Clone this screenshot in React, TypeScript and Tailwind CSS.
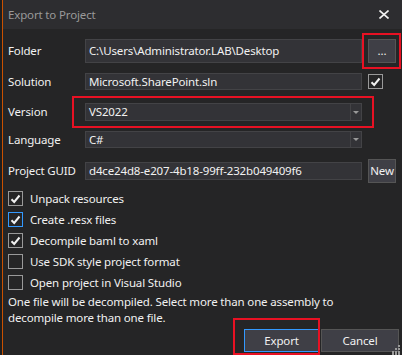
import React from "react";

const font = { fontFamily: '"Noto Sans", "Liberation Sans", sans-serif' };

function Check({ checked, focused }: { checked?: boolean; focused?: boolean }) {
  return (
    <div
      className={`flex h-[15px] w-[15px] shrink-0 items-center justify-center border ${
        focused ? "border-[#3399ff]" : "border-[#999999]"
      } bg-[#252526]`}
    >
      {checked && (
        <svg width="11" height="10" viewBox="0 0 11 10">
          <path d="M1.5 5.2 L4.2 8 L9.5 1.5" fill="none" stroke="#f1f1f1" strokeWidth="2" />
        </svg>
      )}
    </div>
  );
}

function Combo({ value, h }: { value: string; h: string }) {
  return (
    <div className={`flex ${h} w-[277px] items-center border border-[#434346] bg-[#333337]`}>
      <div className="flex-1 pl-[3px] text-[#f1f1f1]">{value}</div>
      <div className="flex h-full w-[11px] items-center justify-center border-l border-[#434346]">
        <svg width="6" height="3" viewBox="0 0 6 3">
          <path d="M0 0 H6 L3 3 Z" fill="#999999" />
        </svg>
      </div>
    </div>
  );
}

function Row({ label, children, className }: { label: string; children: React.ReactNode; className: string }) {
  return (
    <div className={`flex items-center ${className}`}>
      <div className="w-[85px] shrink-0 whitespace-nowrap pl-[8px] text-[#f1f1f1]">{label}</div>
      {children}
    </div>
  );
}

export default function App() {
  const boxes: [string, boolean, boolean][] = [
    ["Unpack resources", true, false],
    ["Create .resx files", true, true],
    ["Decompile baml to xaml", true, false],
    ["Use SDK style project format", false, false],
    ["Open project in Visual Studio", false, false],
  ];
  return (
    <div
      className="relative flex h-[355px] w-[402px] overflow-hidden bg-[#252526] text-[11.5px] leading-[16px] tracking-[-0.15px]"
      style={font}
    >
      <div className="w-[2px] bg-[#1e1e1e]" />
      <div className="w-[1px] bg-[#ca5100]" />
      <div className="flex flex-1 flex-col">
        <div className="flex h-[29px] items-center justify-between bg-[#2d2d30] pl-[5px] pr-[13px]">
          <span className="text-[#999999]">Export to Project</span>
          <svg width="10" height="9" viewBox="0 0 10 9">
            <path d="M0.5 0.5 L9.5 8.5 M9.5 0.5 L0.5 8.5" stroke="#f1f1f1" strokeWidth="1.6" />
          </svg>
        </div>

        <Row label="Folder" className="mt-[10px] h-[24px] -ml-[3px]">
          <div className="flex h-[24px] w-[277px] items-center border border-[#434346] bg-[#333337] pl-[3px] text-[#f1f1f1]">
            C:\Users\Administrator.LAB\Desktop
          </div>
          <div className="ml-[6px] flex h-[24px] w-[28px] items-center justify-center border border-[#555555] bg-[#3f3f46] text-[#f1f1f1]">
            ...
          </div>
        </Row>

        <Row label="Solution" className="mt-[10px] h-[17px] -ml-[3px]">
          <div className="flex h-[17px] w-[277px] items-center border border-[#434346] bg-[#333337] pl-[3px] text-[#f1f1f1]">
            Microsoft.SharePoint.sln
          </div>
          <div className="ml-[6px]">
            <Check checked />
          </div>
        </Row>

        <Row label="Version" className="mt-[13px] h-[18px] -ml-[3px]">
          <Combo value="VS2022" h="h-[18px]" />
        </Row>

        <Row label="Language" className="mt-[10px] h-[17px] -ml-[3px]">
          <Combo value="C#" h="h-[17px]" />
        </Row>

        <Row label="Project GUID" className="mt-[11px] h-[24px] -ml-[3px]">
          <div className="flex h-[18px] w-[277px] items-center border border-[#434346] bg-[#333337] pl-[3px] text-[#f1f1f1]">
            d4ce24d8-e207-4b18-99ff-232b049409f6
          </div>
          <div className="ml-[6px] flex h-[24px] w-[28px] items-center justify-center border border-[#555555] bg-[#3f3f46] text-[#f1f1f1]">
            New
          </div>
        </Row>

        <div className="mt-[5px] -ml-[3px] flex flex-col pl-[8px]">
          {boxes.map(([t, c, f]) => (
            <div key={t} className="flex h-[21px] items-center gap-[7px] text-[#f1f1f1]">
              <Check checked={c} focused={f} />
              <span>{t}</span>
            </div>
          ))}
        </div>

        <div className="-ml-[3px] mt-[1px] pl-[8px] text-[#f1f1f1]">
          One file will be decompiled. Select more than one assembly to
          <br />
          decompile more than one file.
        </div>

        <div className="mt-[3px] flex justify-end gap-[2px] pr-[3px]">
          <div className="flex h-[23px] w-[75px] items-center justify-center border border-[#3399ff] bg-[#3f3f46] text-[#f1f1f1]">
            Export
          </div>
          <div className="flex h-[23px] w-[78px] items-center justify-center border border-[#555555] bg-[#3f3f46] text-[#f1f1f1]">
            Cancel
          </div>
        </div>
      </div>

      <svg className="absolute bottom-0 right-[2px]" width="10" height="10" viewBox="0 0 10 10">
        {[
          [8, 0], [8, 3], [5, 3], [8, 6], [5, 6], [2, 6], [8, 8], [5, 8], [2, 8],
        ].map(([x, y], i) => (
          <rect key={i} x={x} y={y} width="2" height="2" fill="#999999" />
        ))}
      </svg>

      <div className="absolute left-[362px] top-[33px] h-[36px] w-[39px] border-2 border-[#e81123]" />
      <div className="absolute left-[72px] top-[96px] h-[32px] w-[302px] border-2 border-[#e81123]" />
      <div className="absolute left-[233px] top-[318px] h-[37px] w-[87px] border-2 border-[#e81123]" />
    </div>
  );
}
